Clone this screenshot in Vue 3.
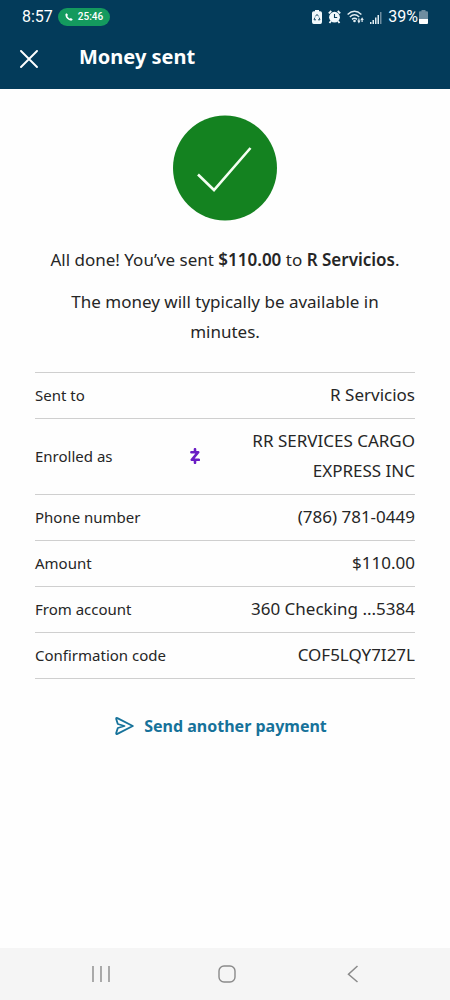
<script setup>
const rows = [
  { label: 'Sent to', value: 'R Servicios' },
  { label: 'Enrolled as', value: 'RR SERVICES CARGO EXPRESS INC', zelle: true },
  { label: 'Phone number', value: '(786) 781-0449' },
  { label: 'Amount', value: '$110.00' },
  { label: 'From account', value: '360 Checking ...5384' },
  { label: 'Confirmation code', value: 'COF5LQY7I27L' },
]
</script>

<template>
  <div class="screen">
    <header class="top">
      <div class="status">
        <span class="clock">8:57</span>
        <span class="call">
          <svg width="8" height="8" viewBox="0 0 8 8" aria-hidden="true">
            <path d="M.5 1 1.8.2 3 2 2.2 3C2.7 4.2 3.7 5.1 4.9 5.7L5.8 5 7.7 6.2 7 7.5C4 8.3-.2 4.6.5 1Z" fill="#fff" />
          </svg>
          25:46
        </span>
        <span class="indicators">
          <svg width="10" height="14" viewBox="0 0 10 14" aria-hidden="true">
            <path d="M3 0h4v1.3h1.3Q10 1.3 10 3v9q0 2-1.7 2H1.7Q0 14 0 12V3q0-1.7 1.7-1.7H3Z" fill="#f1f8fb" />
            <path d="M3.4 6.4 5 4.4l1.6 2M7.2 7.6 8 9.8H6M4 9.8H2l.8-2.2" fill="none" stroke="#063b5a" stroke-width=".9" />
          </svg>
          <svg width="13" height="14" viewBox="0 0 13 14" aria-hidden="true">
            <circle cx="6.5" cy="7.2" r="5.4" fill="#f1f8fb" />
            <path d="M.8 3.3 3.3 1M12.2 3.3 9.7 1M3 11 1.5 13M10 11l1.5 2" stroke="#f1f8fb" stroke-width="1.8" />
            <path d="M6.5 4v3.5h2.7" fill="none" stroke="#063b5a" stroke-width="1.1" />
          </svg>
          <svg width="17" height="14" viewBox="0 0 17 14" aria-hidden="true">
            <g fill="none" stroke="#e3eef3" stroke-width="1.4">
              <path d="M.6 4.4Q7.5-1.8 14.4 4.4M2.8 7Q7.5 2.7 12.2 7M5 9.4Q7.5 7.2 10 9.4" />
            </g>
            <circle cx="7.5" cy="11" r="1.3" fill="#e3eef3" />
            <path d="M10.2 10.5h3.4L11.9 13.4ZM13.4 10 15.1 7.2 16.8 10Z M14.5 9.5h1.2V12h-1.2ZM11.3 8.5h1.2V11h-1.2Z" fill="#e3eef3" />
          </svg>
          <svg width="12" height="13" viewBox="0 0 12 13" aria-hidden="true">
            <path d="M0 11h1.5v2H0ZM2.5 9H4v4H2.5ZM5 6.5h1.5V13H5ZM7.5 4H9v9H7.5Z" fill="#e3eef3" />
            <path d="M10 1h1.5v12H10Z" fill="#6f8da0" />
          </svg>
          <span class="percent">39%</span>
          <svg width="9" height="14" viewBox="0 0 9 14" aria-hidden="true">
            <path d="M2.5 0h4v1.3H8q1 0 1 1V9H0V2.3q0-1 1-1h1.5Z" fill="#6f8da0" />
            <path d="M0 9h9v4q0 1-1 1H1q-1 0-1-1Z" fill="#fff" />
          </svg>
        </span>
      </div>
      <div class="bar">
        <button class="close" type="button" aria-label="Close">
          <svg width="18" height="18" viewBox="0 0 18 18" aria-hidden="true">
            <path d="M1 1 17 17M17 1 1 17" stroke="#fff" stroke-width="1.9" stroke-linecap="round" />
          </svg>
        </button>
        <h1>Money sent</h1>
      </div>
    </header>

    <main>
      <svg class="done" width="104" height="106" viewBox="0 0 104 106" role="img" aria-label="Success">
        <ellipse cx="52" cy="53" rx="52" ry="52.5" fill="#148220" />
        <path d="M25 59.5 41 75 77.5 33" fill="none" stroke="#f4fff2" stroke-width="2.6" />
      </svg>
      <p>All done! You’ve sent <strong>$110.00</strong> to <strong>R Servicios</strong>.</p>
      <p>The money will typically be available in minutes.</p>

      <table>
        <tbody>
          <tr v-for="row in rows" :key="row.label">
            <th scope="row">{{ row.label }}</th>
            <td class="mark">
              <svg v-if="row.zelle" width="10" height="16" viewBox="0 0 10 16" role="img" aria-label="Zelle">
                <path d="M1.4 4.2H8.2L1.8 11.8H8.8M5 1.2V4M5 12v2.8" fill="none" stroke="#6a1cc4" stroke-width="2.6" stroke-linecap="round" stroke-linejoin="round" />
              </svg>
            </td>
            <td>{{ row.value }}</td>
          </tr>
        </tbody>
      </table>

      <a class="again" href="#">
        <svg width="19" height="18" viewBox="0 0 19 18" aria-hidden="true">
          <path d="M1.2 2Q1 .6 2.4 1.1L17.8 9 2.4 16.9Q1 17.4 1.2 16L2.8 11 9.5 9 2.8 7Z" fill="none" stroke="#16729a" stroke-width="1.8" stroke-linejoin="round" />
        </svg>
        Send another payment
      </a>
    </main>

    <nav>
      <button type="button" aria-label="Recent apps">
        <svg width="18" height="18" viewBox="0 0 18 18" aria-hidden="true">
          <path d="M1 1v16M9 1v16M17 1v16" stroke="#8a8a8a" stroke-width="1.4" />
        </svg>
      </button>
      <button type="button" aria-label="Home">
        <svg width="18" height="18" viewBox="0 0 18 18" aria-hidden="true">
          <rect x="1" y="1" width="16" height="16" rx="5" fill="none" stroke="#8a8a8a" stroke-width="1.4" />
        </svg>
      </button>
      <button type="button" aria-label="Back">
        <svg width="18" height="18" viewBox="0 0 18 18" aria-hidden="true">
          <path d="M13.5 1 4.5 9.3l9 7.7" fill="none" stroke="#8a8a8a" stroke-width="1.5" />
        </svg>
      </button>
    </nav>
  </div>
</template>

<style>
body {
  margin: 0;
  background: #fff;
}
</style>

<style scoped>
.screen {
  display: flex;
  flex-direction: column;
  min-height: 100vh;
  background: #fefefe;
  color: #262626;
  font-family: "Noto Sans", "Open Sans", sans-serif;
  font-size: 17px;
  line-height: 30px;
}

svg {
  display: block;
  flex: none;
}

button {
  padding: 0;
  border: 0;
  background: none;
}

.top {
  background: #033b5a;
  color: #fff;
}

.status {
  display: flex;
  align-items: center;
  height: 34px;
  padding: 0 22px;
  font-family: Roboto, sans-serif;
  font-size: 16px;
  line-height: 20px;
}

.call {
  display: flex;
  align-items: center;
  gap: 5px;
  height: 18px;
  margin-left: 5px;
  padding: 0 7px;
  border-radius: 9px;
  background: #149a5e;
  font-size: 10px;
  font-weight: 500;
}

.indicators {
  display: flex;
  align-items: center;
  gap: 6px;
  margin-left: auto;
}

.percent {
  margin-right: -5px;
}

.bar {
  display: flex;
  align-items: center;
  height: 55px;
}

.close {
  margin: 0 41px 6px 20px;
}

h1 {
  margin: 0 0 10px;
  font-size: 20px;
  font-weight: 700;
}

main {
  flex: 1;
  padding: 26px 35px;
  text-align: center;
}

.done {
  margin: 0 auto 24px;
}

p {
  margin: 0 0 12px;
}

strong {
  font-weight: 600;
}

table {
  width: 100%;
  margin-top: 25px;
  border-collapse: collapse;
  border-top: 1px solid #cfcfcf;
}

tr {
  border-bottom: 1px solid #cfcfcf;
}

th,
td {
  padding: 7px 0 8px;
  text-align: right;
  font-weight: 400;
}

th {
  width: 140px;
  text-align: left;
  font-size: 15px;
}

.mark {
  width: 40px;
  padding-left: 15px;
}

.again {
  display: inline-flex;
  align-items: center;
  gap: 10px;
  margin-top: 32px;
  padding-right: 8px;
  color: #16729a;
  font-size: 16px;
  font-weight: 700;
  text-decoration: none;
}

nav {
  display: flex;
  justify-content: space-around;
  align-items: center;
  height: 52px;
  padding: 0 34px 0 38px;
  background: #f5f5f5;
}
</style>
